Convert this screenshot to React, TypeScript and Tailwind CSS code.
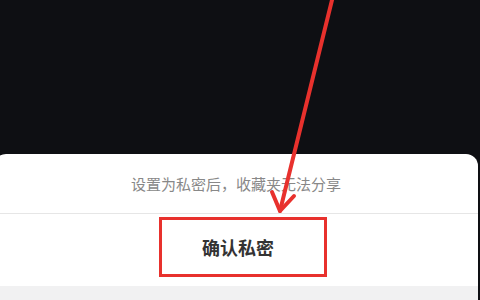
export default function App() {
  return (
    <div
      className="relative flex h-[300px] w-[480px] flex-col overflow-hidden bg-[#0e0f13]"
      style={{ fontFamily: '"Noto Sans CJK SC", "Noto Sans", sans-serif' }}
    >
      <div className="h-[154px] shrink-0" />

      {/* Bottom sheet */}
      <div className="-ml-[6px] mr-[2px] flex flex-1 flex-col overflow-hidden rounded-t-[12px] bg-white">
        <div className="flex h-[59px] items-center justify-center pt-[1px] text-[15px] text-[#888]">
          设置为私密后，收藏夹无法分享
        </div>
        <div className="h-px bg-[#e6e6e6]" />
        <div className="flex h-[72px] justify-center pt-[3px]">
          <div className="ml-[14px] flex h-[60px] w-[168px] items-center border-[3px] border-[#e8312d] pl-[40px] text-[18px] font-bold text-[#333]">
            确认私密
          </div>
        </div>
        <div className="flex-1 bg-[#f1f1f2]" />
      </div>

      {/* Red annotation arrow */}
      <svg
        className="pointer-events-none absolute inset-0"
        width="480"
        height="300"
        viewBox="0 0 480 300"
      >
        <g stroke="#e8312d" strokeWidth="4" strokeLinecap="round" strokeLinejoin="round" fill="none">
          <path d="M333 -4 L280 211" />
          <path d="M272 192 L280 211 L294 196" />
        </g>
      </svg>
    </div>
  );
}
